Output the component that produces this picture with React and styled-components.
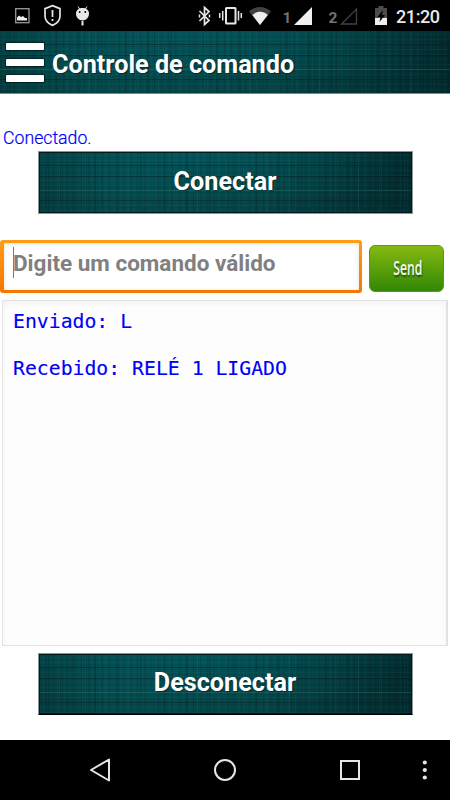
import React, { useState } from 'react';

import styled, { createGlobalStyle, css } from 'styled-components';

const GlobalStyle = createGlobalStyle`
  html,
  body {
    margin: 0;
    padding: 0;
    background: #fff;
  }

  * {
    box-sizing: border-box;
  }
`;

// woven teal fabric shared by the title bar and the big buttons
const fabric = css`
  background:
    linear-gradient(
      transparent 13px,
      rgba(0, 16, 20, 0.42) 13px 14px,
      transparent 14px 24px,
      rgba(0, 16, 20, 0.38) 24px 25px,
      transparent 25px 38px,
      rgba(90, 150, 150, 0.2) 38px 39px,
      transparent 39px 48px,
      rgba(0, 16, 20, 0.4) 48px 49px,
      transparent 49px
    ),
    repeating-linear-gradient(
      rgba(0, 20, 24, 0.08) 0 1px,
      transparent 1px 3px,
      rgba(60, 140, 140, 0.06) 3px 4px,
      transparent 4px 5px
    ),
    repeating-linear-gradient(
      90deg,
      rgba(0, 20, 24, 0.13) 0 1px,
      transparent 1px 4px,
      rgba(50, 130, 130, 0.07) 4px 5px,
      transparent 5px 7px
    ),
    repeating-linear-gradient(
      90deg,
      transparent 0 9px,
      rgba(0, 20, 24, 0.14) 9px 11px,
      transparent 11px 20px,
      rgba(50, 130, 130, 0.12) 20px 21px,
      transparent 21px 23px
    ),
    radial-gradient(
      ellipse 60% 100% at 43% 0%,
      rgba(2, 92, 99, 0.65),
      transparent
    ),
    linear-gradient(90deg, #043c3f, #04484b 20%, #044345 60%, #022a2d);
`;

const Screen = styled.div`
  width: 450px;
  height: 800px;
  display: flex;
  flex-direction: column;
  overflow: hidden;
  background: #fff;
  font-family: Roboto, sans-serif;
`;

const StatusBar = styled.div`
  height: 31px;
  flex: none;
  background: #000;

  svg {
    display: block;
  }
`;

const TitleBar = styled.header`
  ${fabric}
  height: 63px;
  flex: none;
  display: flex;
  align-items: flex-start;
  padding: 12px 6px 0;
  border-bottom: 1px solid #7b8888;
`;

const MenuButton = styled.button`
  width: 39px;
  height: 39px;
  padding: 0;
  border: none;
  background: none;
  display: flex;
  flex-direction: column;
  justify-content: space-between;
`;

const MenuLine = styled.span`
  width: 38px;
  height: 7px;
  background: #fff;
  border-radius: 1px;
  box-shadow: 0 0 1px 1px rgba(0, 0, 0, 0.5);
`;

const Title = styled.h1`
  margin: 7px 0 0 7px;
  color: #fff;
  font-size: 25.2px;
  font-weight: 700;
  line-height: 30px;
  text-shadow: 1px 1px 1px rgba(0, 0, 0, 0.4);
`;

const ConnectionStatus = styled.div`
  padding: 34px 0 0 3px;
  height: 57px;
  flex: none;
  color: #0000f8;
  font-size: 17.7px;
  font-weight: 300;
  line-height: 20px;
  -webkit-text-stroke: 0.2px #0000f8;
`;

const WideButton = styled.button`
  ${fabric}
  width: 375px;
  height: ${(props) => (props.$darkEdge ? '62px' : '63px')};
  flex: none;
  margin-left: 37.5px;
  padding: 0 0 2px;
  border: 1px solid #8a9595;
  border-bottom-color: ${(props) => (props.$darkEdge ? '#000' : '#8a9595')};
  box-shadow: inset 1px 1px 0 #021b1e, inset -1px -1px 0 #021b1e;
  color: #fff;
  font: 700 25.2px/30px Roboto, sans-serif;
  text-shadow: 1px 1px 1px rgba(0, 0, 0, 0.4);
`;

const CommandRow = styled.div`
  display: flex;
  align-items: flex-start;
  gap: 7px;
  margin-top: 26px;
  height: 54px;
  flex: none;
`;

const InputFrame = styled.div`
  width: 362px;
  height: 53px;
  border-radius: 3px;
  padding: 3px 3px 3px 4px;
  background: linear-gradient(#ff9d16, #f57600);
`;

const InputBody = styled.div`
  display: flex;
  align-items: flex-start;
  height: 47px;
  padding: 4px 0 0 9px;
  background: #fff;
  box-shadow: inset 0 1px 4px rgba(0, 0, 0, 0.13);
`;

const Caret = styled.span`
  width: 1px;
  height: 31px;
  background: #777;
`;

const CommandInput = styled.input`
  width: 320px;
  height: 30px;
  margin: 1px 0 0 -1px;
  padding: 0;
  border: none;
  outline: none;
  background: none;
  color: #333;
  font: 700 22.5px/30px Roboto, sans-serif;

  &::placeholder {
    color: #808080;
    opacity: 1;
  }
`;

const SendButton = styled.button`
  width: 75px;
  height: 47px;
  margin-top: 5px;
  padding: 0 0 2px 2px;
  border: 1px solid #529f0b;
  border-radius: 6px;
  background: linear-gradient(#85b910, #338706);
  color: #f4f8ee;
  font: 600 20px/24px 'Open Sans', sans-serif;
  text-shadow: 1px 2px 2px rgba(0, 40, 0, 0.6);
`;

const SendLabel = styled.span`
  display: inline-block;
  transform: scaleX(0.61);
`;

const Log = styled.div`
  width: 446px;
  height: 346px;
  flex: none;
  margin: 6px 0 7px 2px;
  padding: 9px 10px;
  border: 1px solid #e2e2e2;
  border-width: 1px 2px 1px 1px;
  background: #fdfdfd;
  box-shadow: inset 0 3px 6px rgba(0, 0, 0, 0.04);
  color: #0000f8;
  font: 19.8px/23.5px 'DejaVu Sans Mono', monospace;
  -webkit-text-stroke: 0.15px #0000f8;
  white-space: pre;
`;

const LogLine = styled.div`
  margin-bottom: 23.5px;
`;

const NavBar = styled.nav`
  height: 60px;
  flex: none;
  margin-top: auto;
  background: #000;

  svg {
    display: block;
  }
`;

const logLines = ['Enviado: L', 'Recebido: RELÉ 1 LIGADO'];

function StatusIcons() {
  return (
    <svg width="450" height="31" fontFamily="Roboto, sans-serif">
      <rect x="15.7" y="8.7" width="13.3" height="14" fill="none" stroke="#999" strokeWidth="1.3" />
      <path d="M17 20.5v-3l2-2 2 1.5 2-1 2 2h2v2.5z" fill="#eee" />
      <path
        d="M52.5 5.6l7.5 3v7.3c0 4.4-3.5 7.7-7.5 9.5-4-1.8-7.5-5.1-7.5-9.5V8.6z"
        fill="none"
        stroke="#e6e6e6"
        strokeWidth="1.7"
      />
      <path d="M52.5 10v7m0 2v2" stroke="#e6e6e6" strokeWidth="1.8" />
      <g stroke="#e6e6e6" strokeWidth="1">
        <path d="M78 6.5l2 3m7-3l-2 3" />
        <path d="M82.5 21v4.5" strokeWidth="2" />
      </g>
      <path d="M76 13.5c0-3.5 3-5.5 6.5-5.5s6.5 2 6.5 5.5c0 4-3 7-6.5 7s-6.5-3-6.5-7z" fill="#e6e6e6" />
      <circle cx="79.7" cy="12" r="0.9" fill="#000" />
      <circle cx="85.3" cy="12" r="0.9" fill="#000" />

      <path
        d="M199.5 11l9.5 9.5-4.5 4V7.5l4.5 4-9.5 9.5"
        fill="none"
        stroke="#e6e6e6"
        strokeWidth="1.7"
      />
      <path d="M209.5 14.5v3M199.5 14.5v3" stroke="#e6e6e6" strokeWidth="1.5" />
      <g fill="none" stroke="#e6e6e6">
        <rect x="226" y="8" width="9.5" height="15.5" rx="0.5" strokeWidth="2" />
        <path d="M222.7 11v9.5M219.7 13v5M238.5 11v9.5M241.3 13v5" strokeWidth="1.5" />
      </g>
      <path d="M249 11.5c6.5-6 15.5-6 22 0L260 25z" fill="#414141" />
      <path d="M252.3 15c4.7-4.2 10.8-4.2 15.5 0L260 25z" fill="#f0f0f0" />

      <text x="282.5" y="22.5" fill="#737373" fontSize="15.5" fontWeight="700">1</text>
      <path d="M312 7v18h-18z" fill="#f0f0f0" />
      <text x="328.5" y="22.5" fill="#737373" fontSize="15.5" fontWeight="700">2</text>
      <path d="M356.5 9v15h-15z" fill="none" stroke="#414141" strokeWidth="1.3" />

      <path d="M375 8h3.5V6h5v2h3.5v11h-12z" fill="#4c4c4c" />
      <path d="M375 18h12v7h-12z" fill="#f0f0f0" />
      <path d="M383 10l-5.5 7h3l-1 5 5.5-7h-3z" fill="#000" />
      <text x="396" y="22.7" fill="#e8e8e8" fontSize="18" fontWeight="500" textLength="44">21:20</text>
    </svg>
  );
}

function NavIcons() {
  return (
    <svg width="450" height="60" fill="none" stroke="#e6e6e6" strokeWidth="2">
      <path d="M91 30l18-10.5v21z" strokeLinejoin="round" />
      <circle cx="225" cy="30" r="10" />
      <rect x="341" y="21" width="18" height="18" />
      <g fill="#e6e6e6" stroke="none">
        <circle cx="424.8" cy="22.5" r="2.1" />
        <circle cx="424.8" cy="30" r="2.1" />
        <circle cx="424.8" cy="37.5" r="2.1" />
      </g>
    </svg>
  );
}

function App() {
  const [command, setCommand] = useState('');

  return (
    <Screen>
      <GlobalStyle />
      <StatusBar>
        <StatusIcons />
      </StatusBar>
      <TitleBar>
        <MenuButton aria-label="Menu">
          <MenuLine />
          <MenuLine />
          <MenuLine />
        </MenuButton>
        <Title>Controle de comando</Title>
      </TitleBar>
      <ConnectionStatus>Conectado.</ConnectionStatus>
      <WideButton>Conectar</WideButton>
      <CommandRow>
        <InputFrame>
          <InputBody>
            <Caret />
            <CommandInput
              value={command}
              placeholder="Digite um comando válido"
              onChange={(e) => setCommand(e.target.value)}
            />
          </InputBody>
        </InputFrame>
        <SendButton>
          <SendLabel>Send</SendLabel>
        </SendButton>
      </CommandRow>
      <Log>
        {logLines.map((line) => (
          <LogLine key={line}>{line}</LogLine>
        ))}
      </Log>
      <WideButton $darkEdge>Desconectar</WideButton>
      <NavBar>
        <NavIcons />
      </NavBar>
    </Screen>
  );
}

export default App;
